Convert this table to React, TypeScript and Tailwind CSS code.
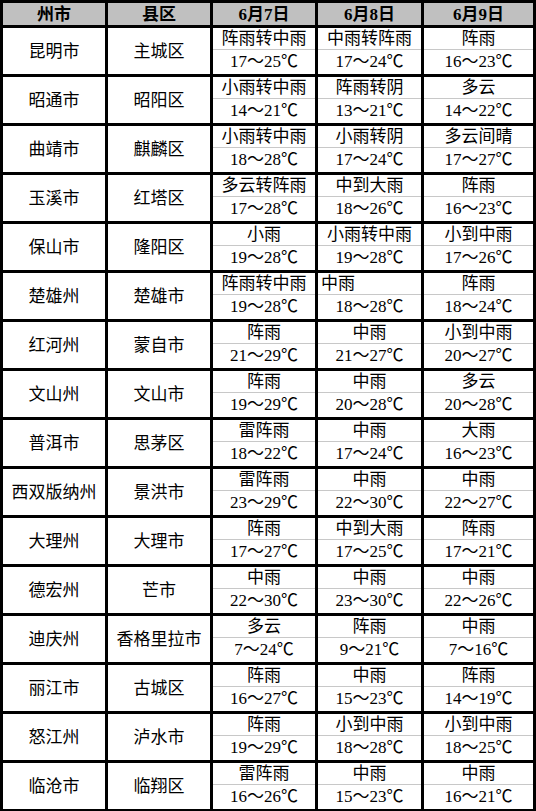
import { FC, Fragment } from "react";

type Day = { w: string; t: string; left?: boolean };
type Row = { city: string; county: string; days: Day[] };

const rows: Row[] = [
    { city: "昆明市", county: "主城区", days: [{ w: "阵雨转中雨", t: "17～25℃" }, { w: "中雨转阵雨", t: "17～24℃" }, { w: "阵雨", t: "16～23℃" }] },
    { city: "昭通市", county: "昭阳区", days: [{ w: "小雨转中雨", t: "14～21℃" }, { w: "阵雨转阴", t: "13～21℃" }, { w: "多云", t: "14～22℃" }] },
    { city: "曲靖市", county: "麒麟区", days: [{ w: "小雨转中雨", t: "18～28℃" }, { w: "小雨转阴", t: "17～24℃" }, { w: "多云间晴", t: "17～27℃" }] },
    { city: "玉溪市", county: "红塔区", days: [{ w: "多云转阵雨", t: "17～28℃" }, { w: "中到大雨", t: "18～26℃" }, { w: "阵雨", t: "16～23℃" }] },
    { city: "保山市", county: "隆阳区", days: [{ w: "小雨", t: "19～28℃" }, { w: "小雨转中雨", t: "19～28℃" }, { w: "小到中雨", t: "17～26℃" }] },
    { city: "楚雄州", county: "楚雄市", days: [{ w: "阵雨转中雨", t: "19～28℃" }, { w: "中雨", t: "18～28℃", left: true }, { w: "阵雨", t: "18～24℃" }] },
    { city: "红河州", county: "蒙自市", days: [{ w: "阵雨", t: "21～29℃" }, { w: "中雨", t: "21～27℃" }, { w: "小到中雨", t: "20～27℃" }] },
    { city: "文山州", county: "文山市", days: [{ w: "阵雨", t: "19～29℃" }, { w: "中雨", t: "20～28℃" }, { w: "多云", t: "20～28℃" }] },
    { city: "普洱市", county: "思茅区", days: [{ w: "雷阵雨", t: "18～22℃" }, { w: "中雨", t: "17～24℃" }, { w: "大雨", t: "16～23℃" }] },
    { city: "西双版纳州", county: "景洪市", days: [{ w: "雷阵雨", t: "23～29℃" }, { w: "中雨", t: "22～30℃" }, { w: "中雨", t: "22～27℃" }] },
    { city: "大理州", county: "大理市", days: [{ w: "阵雨", t: "17～27℃" }, { w: "中到大雨", t: "17～25℃" }, { w: "阵雨", t: "17～21℃" }] },
    { city: "德宏州", county: "芒市", days: [{ w: "中雨", t: "22～30℃" }, { w: "中雨", t: "23～30℃" }, { w: "中雨", t: "22～26℃" }] },
    { city: "迪庆州", county: "香格里拉市", days: [{ w: "多云", t: "7～24℃" }, { w: "阵雨", t: "9～21℃" }, { w: "中雨", t: "7～16℃" }] },
    { city: "丽江市", county: "古城区", days: [{ w: "阵雨", t: "16～27℃" }, { w: "中雨", t: "15～23℃" }, { w: "阵雨", t: "14～19℃" }] },
    { city: "怒江州", county: "泸水市", days: [{ w: "阵雨", t: "19～29℃" }, { w: "小到中雨", t: "18～28℃" }, { w: "小到中雨", t: "18～25℃" }] },
    { city: "临沧市", county: "临翔区", days: [{ w: "雷阵雨", t: "16～26℃" }, { w: "中雨", t: "15～23℃" }, { w: "中雨", t: "16～21℃" }] },
];

const headers = ["州市", "县区", "6月7日", "6月8日", "6月9日"];

const App: FC = () => {
    return (
        <div
            className="w-[536px] h-[811px] overflow-hidden bg-white text-black text-[17px] leading-none"
            style={{ fontFamily: '"Liberation Serif", "Noto Sans CJK SC", serif' }}
        >
            <div className="grid grid-cols-[102px_102px_102px_103px_109px] gap-[3px] bg-black p-[3px]">
                {/* Header */}
                {headers.map((h) => (
                    <div key={h} className="h-[22px] bg-[#c0c0c0] flex items-center justify-center font-bold">
                        {h}
                    </div>
                ))}

                {/* Rows */}
                {rows.map((r) => (
                    <Fragment key={r.city}>
                        <div className="h-[46px] bg-white flex items-center justify-center">{r.city}</div>
                        <div className="h-[46px] bg-white flex items-center justify-center">{r.county}</div>
                        {r.days.map((d, i) => (
                            <div key={i} className="h-[46px] bg-white flex flex-col">
                                <div
                                    className={
                                        d.left
                                            ? "h-[22px] border-b border-[#c8c8c8] flex items-center justify-start pl-[3px]"
                                            : "h-[22px] border-b border-[#c8c8c8] flex items-center justify-center"
                                    }
                                >
                                    {d.w}
                                </div>
                                <div className="h-[23px] flex items-center justify-center">{d.t}</div>
                            </div>
                        ))}
                    </Fragment>
                ))}
            </div>
        </div>
    );
};

export default App;
